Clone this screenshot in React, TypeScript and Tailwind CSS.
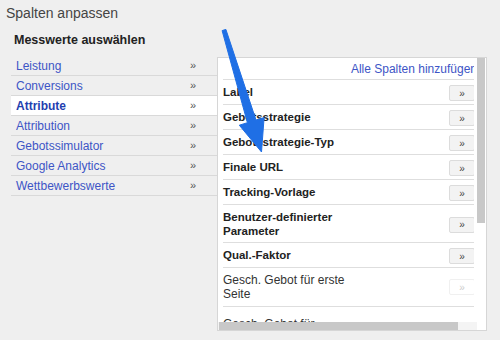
const metrics = [
  'Leistung',
  'Conversions',
  'Attribute',
  'Attribution',
  'Gebotssimulator',
  'Google Analytics',
  'Wettbewerbswerte',
];

const columns = [
  { label: 'Label', h: 'h-[25px]' },
  { label: 'Gebotsstrategie', h: 'h-[25px]' },
  { label: 'Gebotsstrategie-Typ', h: 'h-[25px]' },
  { label: 'Finale URL', h: 'h-[25px]' },
  { label: 'Tracking-Vorlage', h: 'h-[25px]' },
  { label: 'Benutzer-definierter Parameter', h: 'h-[38px]' },
  { label: 'Qual.-Faktor', h: 'h-[25px]' },
];

const selected = 'Attribute';

export default function App() {
  return (
    <div className="relative w-[500px] h-[340px] overflow-hidden bg-[#efefef] font-['Liberation_Sans',Arial,sans-serif]">
      <div className="pt-[5px] pl-[6px] text-[14px] leading-[16px] text-[#444]">Spalten anpassen</div>
      <div className="mt-[11px] pl-[14px] text-[12.5px] leading-[16px] font-bold text-[#222]">
        Messwerte auswählen
      </div>

      <div className="mt-[8px] flex">
        {/* Metric groups */}
        <div className="ml-[11px] w-[206px]">
          {metrics.map((m) => (
            <div
              key={m}
              className={`h-[20px] flex items-center justify-between pl-[5px] pr-[21px] border-b border-[#d9d9d9] text-[12px] ${
                m === selected ? 'bg-white font-bold text-[#1f3fb0]' : 'text-[#3d55c6]'
              }`}
            >
              <span>{m}</span>
              <span className="text-[11px] font-normal text-[#555]">»</span>
            </div>
          ))}
        </div>

        {/* Column picker */}
        <div className="mt-[1px] w-[270px] h-[274px] border border-[#d6d6d6] bg-white flex flex-col">
          <div className="flex h-[264px]">
            <div className="w-[259px] overflow-hidden">
              <div className="w-[256px] h-[264px] overflow-hidden pl-[5px]">
                <div className="w-[254px]">
                  <div className="h-[22px] flex items-center justify-end border-b border-[#dedede] text-[12px] text-[#3d55c6] whitespace-nowrap">
                    Alle Spalten hinzufügen
                  </div>
                  {columns.map((c) => (
                    <div
                      key={c.label}
                      className={`${c.h} flex items-center justify-between border-b border-[#dedede]`}
                    >
                      <span className="w-[130px] text-[11.5px] leading-[14px] font-bold text-[#222]">{c.label}</span>
                      <span className="mr-[2px] mt-[2px] w-[26px] h-[16px] flex items-center justify-center rounded-[2px] border border-[#dcdcdc] bg-[#f3f3f3] text-[10px] text-[#444]">
                        »
                      </span>
                    </div>
                  ))}
                  <div className="h-[39px] flex items-center justify-between border-b border-[#dedede]">
                    <span className="w-[130px] text-[12px] leading-[14px] text-[#333]">Gesch. Gebot für erste Seite</span>
                    <span className="mr-[2px] w-[26px] h-[16px] flex items-center justify-center rounded-[2px] border border-[#f0f0f0] bg-white text-[10px] text-[#ccc]">
                      »
                    </span>
                  </div>
                  <div className="h-[39px] flex items-start pt-[10px]">
                    <span className="w-[130px] text-[12px] leading-[14px] text-[#333]">Gesch. Gebot für Seitenanfang</span>
                  </div>
                </div>
              </div>
            </div>
            <div className="w-[9px] bg-white">
              <div className="w-[8px] h-[165px] bg-[#c8c8c8]" />
            </div>
          </div>
          <div className="h-[8px] flex bg-[#f4f4f4]">
            <div className="ml-[1px] w-[239px] h-[8px] bg-[#c8c8c8]" />
            <div className="flex-1" />
            <div className="w-[9px] bg-white" />
          </div>
        </div>
      </div>

      {/* Blue pointer arrow */}
      <svg className="absolute left-0 top-0 pointer-events-none" width="500" height="340" viewBox="0 0 500 340">
        <polygon
          points="222.1,30.6 247.4,122.7 239.3,125.2 261.5,152 264.1,117.6 256,120.1 225.9,29.4"
          fill="#1f6fe5"
          stroke="#1f6fe5"
          strokeWidth="1"
          strokeLinejoin="round"
        />
      </svg>
    </div>
  );
}
